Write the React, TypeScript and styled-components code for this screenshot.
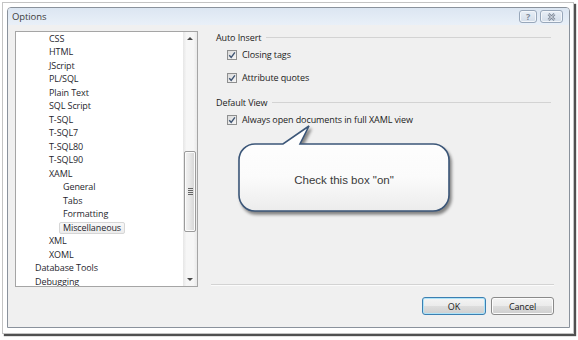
import { createGlobalStyle, styled } from 'styled-components';

type TreeNode = {
  label: string;
  level: number;
  selected?: boolean;
};

const tree: TreeNode[] = [
  { label: 'CSS', level: 2 },
  { label: 'HTML', level: 2 },
  { label: 'JScript', level: 2 },
  { label: 'PL/SQL', level: 2 },
  { label: 'Plain Text', level: 2 },
  { label: 'SQL Script', level: 2 },
  { label: 'T-SQL', level: 2 },
  { label: 'T-SQL7', level: 2 },
  { label: 'T-SQL80', level: 2 },
  { label: 'T-SQL90', level: 2 },
  { label: 'XAML', level: 2 },
  { label: 'General', level: 3 },
  { label: 'Tabs', level: 3 },
  { label: 'Formatting', level: 3 },
  { label: 'Miscellaneous', level: 3, selected: true },
  { label: 'XML', level: 2 },
  { label: 'XOML', level: 2 },
  { label: 'Database Tools', level: 1 },
  { label: 'Debugging', level: 1 },
];

const GlobalStyle = createGlobalStyle`
  body {
    margin: 0;
    background: #fff;
    font-family: "Open Sans", "Noto Sans", sans-serif;
    font-size: 9px;
    letter-spacing: -0.1px;
    color: #222;
  }
`;

function CheckMark() {
  return (
    <svg width="8" height="8" viewBox="0 0 8 8">
      <path d="M1.2 4.2 L3.2 6.3 L6.9 1.3" fill="none" stroke="#3f5573" strokeWidth="1.4" />
    </svg>
  );
}

function Check({ label, top }: { label: string; top: number }) {
  return (
    <CheckRow $top={top}>
      <CheckBox>
        <CheckMark />
      </CheckBox>
      {label}
    </CheckRow>
  );
}

export default function App() {
  return (
    <Page>
      <GlobalStyle />
      <Frame>
        <Window>
          <TitleBar>
            <Title>Options</Title>
            <CaptionButtons>
              <CaptionButton $width={18}>?</CaptionButton>
              <CaptionButton $width={23}>
                <svg width="9" height="8" viewBox="0 0 9 8">
                  <path d="M1.5 1 L7.5 7 M7.5 1 L1.5 7" stroke="#7d8898" strokeWidth="2.6" />
                  <path d="M1.5 1 L7.5 7 M7.5 1 L1.5 7" stroke="#eef2f7" strokeWidth="0.9" />
                </svg>
              </CaptionButton>
            </CaptionButtons>
          </TitleBar>
          <Client>
            <Body>
              <TreeList>
                <TreeItems>
                  {tree.map((node) => (
                    <TreeItem key={node.label} $level={node.level}>
                      <TreeLabel $selected={node.selected}>{node.label}</TreeLabel>
                    </TreeItem>
                  ))}
                </TreeItems>
                <ScrollBar>
                  <ArrowButton>
                    <Arrow $up />
                  </ArrowButton>
                  <Track>
                    <Thumb>
                      <Gripper />
                    </Thumb>
                  </Track>
                  <ArrowButton>
                    <Arrow />
                  </ArrowButton>
                </ScrollBar>
              </TreeList>
              <SettingsPane>
                <GroupHeading $top={0}>Auto Insert</GroupHeading>
                <Check label="Closing tags" top={4} />
                <Check label="Attribute quotes" top={10} />
                <GroupHeading $top={12}>Default View</GroupHeading>
                <Check label="Always open documents in full XAML view" top={4} />
                <Separator />
              </SettingsPane>
            </Body>
            <Footer>
              <DialogButton $default>OK</DialogButton>
              <DialogButton>Cancel</DialogButton>
            </Footer>
          </Client>
        </Window>
      </Frame>
      <Callout>
        <svg width="230" height="100" viewBox="0 0 230 100">
          <defs>
            <linearGradient id="bubble" x1="0" y1="0" x2="0" y2="1">
              <stop offset="0" stopColor="#ffffff" />
              <stop offset="0.6" stopColor="#fbfbfb" />
              <stop offset="1" stopColor="#ececec" />
            </linearGradient>
          </defs>
          <path
            d="M25 24 L53 24 L79 6 L70 24 L203 24 A16 16 0 0 1 219 40 L219 75 A16 16 0 0 1 203 91 L25 91 A16 16 0 0 1 9 75 L9 40 A16 16 0 0 1 25 24 Z"
            fill="url(#bubble)"
            stroke="#3b5678"
            strokeWidth="1.6"
          />
        </svg>
        <BubbleText>Check this box "on"</BubbleText>
      </Callout>
    </Page>
  );
}

const Page = styled.div`
  position: relative;
  width: 578px;
  height: 340px;
  overflow: hidden;
`;

const Frame = styled.div`
  box-sizing: border-box;
  width: 572px;
  height: 332px;
  margin: 2px 0 0 2px;
  padding: 4px;
  background: #fff;
  border: 1px solid #c4c4c4;
  box-shadow: 2px 2px 1px #505050;
`;

const Window = styled.div`
  box-sizing: border-box;
  width: 563px;
  height: 321px;
  display: flex;
  flex-direction: column;
  border: 1px solid #8a929c;
  border-radius: 4px 4px 0 0;
  background: #f0f0f0;
  overflow: hidden;
`;

const TitleBar = styled.div`
  height: 17px;
  display: flex;
  justify-content: space-between;
  align-items: flex-start;
  padding: 0 6px 0 4px;
  background: linear-gradient(#dce6f2, #e9f0f8);
`;

const Title = styled.span`
  line-height: 18px;
  font-size: 9.5px;
  color: #3c3c3c;
`;

const CaptionButtons = styled.div`
  display: flex;
  gap: 3px;
  padding-top: 2px;
`;

const CaptionButton = styled.div<{ $width: number }>`
  box-sizing: border-box;
  width: ${({ $width }) => $width}px;
  height: 13px;
  display: flex;
  align-items: center;
  justify-content: center;
  border: 1px solid #98a7ba;
  border-radius: 3px;
  box-shadow: inset 0 0 0 1px #f3f6fa;
  background: linear-gradient(#e9eff7, #d3dde9);
  color: #7d8898;
  font-weight: 700;
  font-size: 9px;
  line-height: 1;
`;

const Client = styled.div`
  flex: 1;
  display: flex;
  flex-direction: column;
  padding: 6px 15px 12px 7px;
`;

const Body = styled.div`
  display: flex;
  gap: 13px;
  height: 256px;
`;

const TreeList = styled.div`
  box-sizing: border-box;
  width: 183px;
  height: 256px;
  display: flex;
  border: 1px solid #a5a5a5;
  background: #fff;
`;

const TreeItems = styled.div`
  flex: 1;
  overflow: hidden;
`;

const TreeItem = styled.div<{ $level: number }>`
  height: 13.5px;
  display: flex;
  align-items: center;
  padding-left: ${({ $level }) => 15 + ($level - 1) * 14}px;
  white-space: nowrap;
`;

const TreeLabel = styled.span<{ $selected?: boolean }>`
  box-sizing: border-box;
  height: 12px;
  line-height: 10px;
  padding: 0 3px;
  border: 1px solid ${({ $selected }) => ($selected ? '#d6d6d6' : 'transparent')};
  border-radius: 2px;
  background: ${({ $selected }) => ($selected ? 'linear-gradient(#f8f8f8, #ececec)' : 'none')};
  color: #1f1f2e;
`;

const ScrollBar = styled.div`
  width: 14px;
  display: flex;
  flex-direction: column;
  background: linear-gradient(90deg, #e6e6e6, #f6f6f6 25%, #f6f6f6 75%, #e9e9e9);
`;

const ArrowButton = styled.div`
  height: 13px;
  display: flex;
  align-items: center;
  justify-content: center;
`;

const Arrow = styled.div<{ $up?: boolean }>`
  width: 0;
  height: 0;
  border-left: 3px solid transparent;
  border-right: 3px solid transparent;
  ${({ $up }) => ($up ? 'border-bottom: 3px solid #4a4a4a;' : 'border-top: 3px solid #4a4a4a;')}
`;

const Track = styled.div`
  flex: 1;
  padding-top: 106px;
`;

const Thumb = styled.div`
  box-sizing: border-box;
  width: 12px;
  height: 81px;
  margin-left: 1px;
  display: flex;
  align-items: center;
  justify-content: center;
  border: 1px solid #9b9b9b;
  border-radius: 2px;
  box-shadow: inset 0 0 0 1px #fbfbfb;
  background: linear-gradient(90deg, #f3f3f3, #e6e6e6 50%, #d4d4d4);
`;

const Gripper = styled.div`
  width: 5px;
  height: 7px;
  background: repeating-linear-gradient(#666 0 1px, transparent 1px 2px);
`;

const SettingsPane = styled.div`
  flex: 1;
  display: flex;
  flex-direction: column;
`;

const GroupHeading = styled.div<{ $top: number }>`
  height: 13px;
  margin-top: ${({ $top }) => $top}px;
  display: flex;
  align-items: center;
  gap: 5px;
  padding: 0 3px 0 5px;
  white-space: nowrap;

  &::after {
    content: '';
    flex: 1;
    height: 1px;
    background: #d3d3d3;
  }
`;

const CheckRow = styled.div<{ $top: number }>`
  height: 13px;
  margin-top: ${({ $top }) => $top}px;
  display: flex;
  align-items: center;
  gap: 5px;
  padding-left: 16px;
  white-space: nowrap;
`;

const CheckBox = styled.div`
  box-sizing: border-box;
  width: 10px;
  height: 10px;
  display: flex;
  align-items: center;
  justify-content: center;
  border: 1px solid #8e8f8f;
  background: linear-gradient(135deg, #dadada, #f7f7f7);
`;

const Separator = styled.div`
  margin-top: auto;
  margin-bottom: 1px;
  height: 1px;
  background: #d3d3d3;
  border-bottom: 1px solid #fbfbfb;
`;

const Footer = styled.div`
  display: flex;
  justify-content: flex-end;
  gap: 5px;
  margin-top: 10px;
`;

const DialogButton = styled.div<{ $default?: boolean }>`
  box-sizing: border-box;
  width: ${({ $default }) => ($default ? 64 : 63)}px;
  height: 18px;
  display: flex;
  align-items: center;
  justify-content: center;
  border: 1px solid ${({ $default }) => ($default ? '#3c7fb1' : '#8a8a8a')};
  border-radius: 3px;
  box-shadow: inset 0 0 0 1px ${({ $default }) => ($default ? '#aee3f8' : '#fcfcfc')};
  background: linear-gradient(#f4f4f4 0%, #ebebeb 50%, #dddddd 51%, #cfcfcf 100%);
  color: #222;
`;

const Callout = styled.div`
  position: absolute;
  left: 230px;
  top: 120px;
  width: 230px;
  height: 100px;

  svg {
    position: absolute;
    left: 0;
    top: 0;
    filter: drop-shadow(2px 3px 1.5px rgba(0, 0, 0, 0.45));
  }
`;

const BubbleText = styled.div`
  position: absolute;
  left: 9px;
  top: 26px;
  width: 210px;
  height: 67px;
  display: flex;
  align-items: center;
  justify-content: center;
  font-family: "Liberation Sans", Arial, sans-serif;
  font-size: 11.5px;
  letter-spacing: 0;
  color: #3a3a3a;
`;
